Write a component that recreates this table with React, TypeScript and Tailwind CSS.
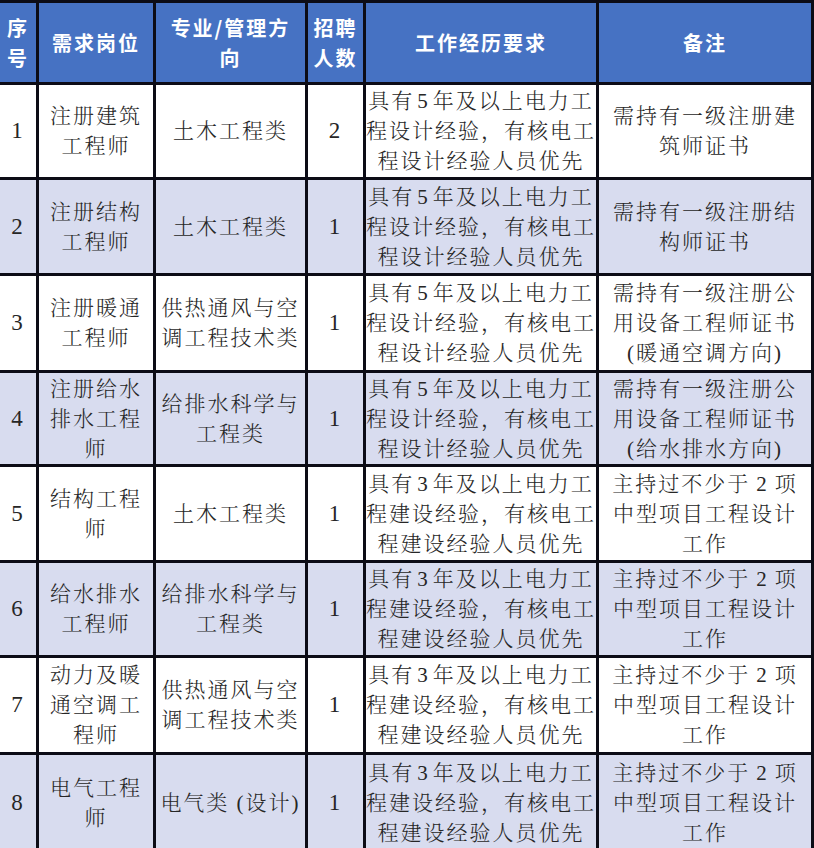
import React from "react";

type Row = {
  no: string;
  post: string[];
  major: string[];
  count: string;
  exp: React.ReactNode[];
  note: React.ReactNode[];
};

const Num = ({ n }: { n: string }) => <span className="mx-[3px]">{n}</span>;

const exp5: React.ReactNode[] = [
  <>具有<Num n="5" />年及以上电力工</>,
  "程设计经验，有核电工",
  "程设计经验人员优先",
];
const exp3: React.ReactNode[] = [
  <>具有<Num n="3" />年及以上电力工</>,
  "程建设经验，有核电工",
  "程建设经验人员优先",
];
const note2: React.ReactNode[] = [
  <>主持过不少于<span className="mx-[6px]">2</span>项</>,
  "中型项目工程设计",
  "工作",
];

const rows: Row[] = [
  { no: "1", post: ["注册建筑", "工程师"], major: ["土木工程类"], count: "2", exp: exp5, note: ["需持有一级注册建", "筑师证书"] },
  { no: "2", post: ["注册结构", "工程师"], major: ["土木工程类"], count: "1", exp: exp5, note: ["需持有一级注册结", "构师证书"] },
  { no: "3", post: ["注册暖通", "工程师"], major: ["供热通风与空", "调工程技术类"], count: "1", exp: exp5, note: ["需持有一级注册公", "用设备工程师证书", "(暖通空调方向)"] },
  { no: "4", post: ["注册给水", "排水工程", "师"], major: ["给排水科学与", "工程类"], count: "1", exp: exp5, note: ["需持有一级注册公", "用设备工程师证书", "(给水排水方向)"] },
  { no: "5", post: ["结构工程", "师"], major: ["土木工程类"], count: "1", exp: exp3, note: note2 },
  { no: "6", post: ["给水排水", "工程师"], major: ["给排水科学与", "工程类"], count: "1", exp: exp3, note: note2 },
  { no: "7", post: ["动力及暖", "通空调工", "程师"], major: ["供热通风与空", "调工程技术类"], count: "1", exp: exp3, note: note2 },
  { no: "8", post: ["电气工程", "师"], major: ["电气类 (设计)"], count: "1", exp: exp3, note: note2 },
];

function Head({ lines }: { lines: string[] }) {
  return (
    <div className="bg-[#4672c3] flex flex-col items-center justify-center text-white font-bold text-[20px] leading-[30px] tracking-[2px] font-['Noto_Sans_CJK_SC',sans-serif]">
      {lines.map((l, i) => (
        <div key={i} className="whitespace-nowrap">{l}</div>
      ))}
    </div>
  );
}

function Cell({ lines, bg, num }: { lines: React.ReactNode[]; bg: string; num?: boolean }) {
  return (
    <div
      className={`${bg} flex flex-col items-center justify-center text-[#262626] leading-[30px] tracking-[2px] font-light font-['Liberation_Serif','Noto_Serif_CJK_SC','Noto_Sans_CJK_SC',serif] ${
        num ? "text-[23px]" : "text-[21px]"
      }`}
    >
      {lines.map((l, i) => (
        <div key={i} className="whitespace-nowrap">{l}</div>
      ))}
    </div>
  );
}

export default function App() {
  return (
    <div className="w-[814px] h-[848px] overflow-hidden bg-white">
      <div className="grid grid-cols-[36px_114px_149px_55px_230px_212px] grid-rows-[79px_92px_93px_94px_91px_93px_92px_94px_96px] gap-[3px] pt-[3px] pr-[3px] bg-[#0c0c16]">
        <Head lines={["序", "号"]} />
        <Head lines={["需求岗位"]} />
        <Head lines={["专业/管理方", "向"]} />
        <Head lines={["招聘", "人数"]} />
        <Head lines={["工作经历要求"]} />
        <Head lines={["备注"]} />
        {rows.map((r, i) => {
          const bg = i % 2 === 0 ? "bg-white" : "bg-[#d8dcef]";
          return (
            <React.Fragment key={r.no}>
              <Cell lines={[r.no]} bg={bg} num />
              <Cell lines={r.post} bg={bg} />
              <Cell lines={r.major} bg={bg} />
              <Cell lines={[r.count]} bg={bg} num />
              <Cell lines={r.exp} bg={bg} />
              <Cell lines={r.note} bg={bg} />
            </React.Fragment>
          );
        })}
      </div>
    </div>
  );
}
